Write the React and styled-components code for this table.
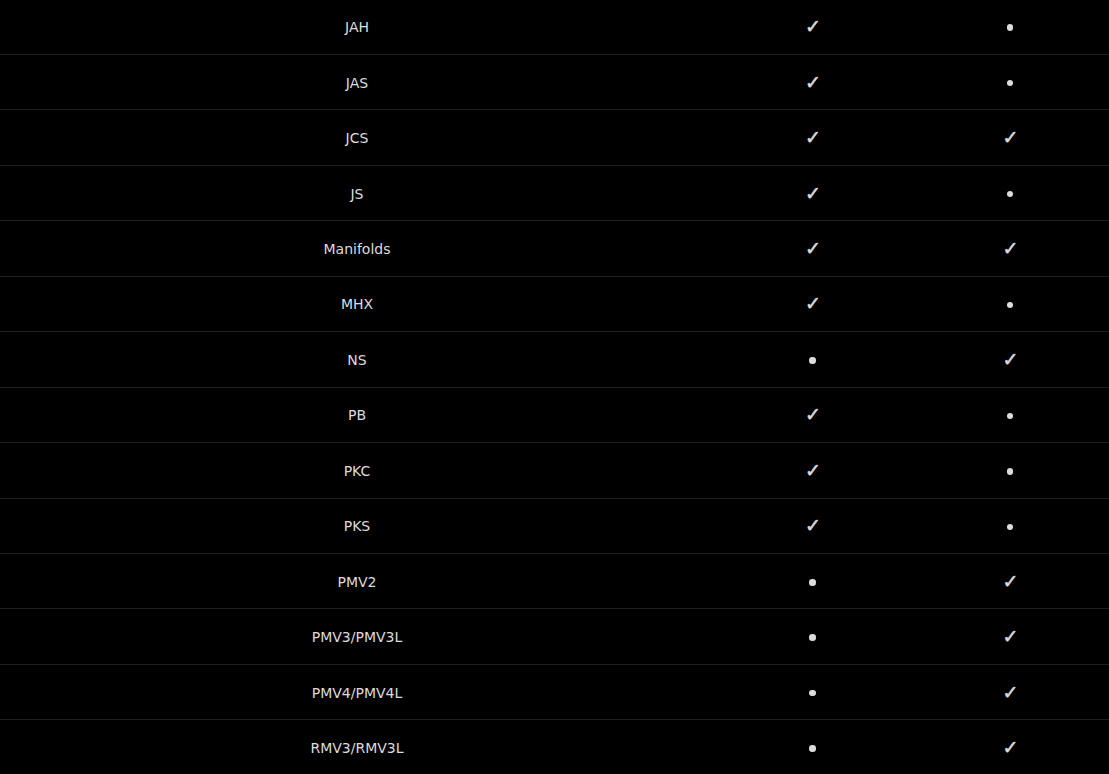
import React from "react";
import styled, { createGlobalStyle } from "styled-components";

const GlobalStyle = createGlobalStyle`
  html, body {
    margin: 0;
    padding: 0;
    background: #000;
    overflow: hidden;
  }
`;

const Table = styled.div`
  margin-top: -0.5px;
  font-family: "DejaVu Sans", "Liberation Sans", sans-serif;
  font-size: 14px;
  color: #dcdcdc;
`;

const Row = styled.div`
  display: grid;
  grid-template-columns: 714px 197px 1fr;
  align-items: center;
  box-sizing: border-box;
  height: 55.46px;
  border-bottom: 1px solid #1e1e1e;
`;

const Cell = styled.div`
  text-align: center;
  display: flex;
  justify-content: center;
  align-items: center;
  padding-top: ${(p) => (p.$name ? "1px" : "0")};
`;

const Check = styled.span`
  font-family: "DejaVu Sans", sans-serif;
  font-size: 19px;
  line-height: 1;
  -webkit-text-stroke: 0.5px #dcdcdc;
  margin-left: 1px;
`;

const Dot = styled.span`
  width: 6.5px;
  height: 6.5px;
  border-radius: 50%;
  background: #dcdcdc;
  margin-top: 2px;
`;

const rows = [
  ["JAH", 1, 0],
  ["JAS", 1, 0],
  ["JCS", 1, 1],
  ["JS", 1, 0],
  ["Manifolds", 1, 1],
  ["MHX", 1, 0],
  ["NS", 0, 1],
  ["PB", 1, 0],
  ["PKC", 1, 0],
  ["PKS", 1, 0],
  ["PMV2", 0, 1],
  ["PMV3/PMV3L", 0, 1],
  ["PMV4/PMV4L", 0, 1],
  ["RMV3/RMV3L", 0, 1],
];

const Mark = ({ on }) => (on ? <Check>✓</Check> : <Dot />);

export default function App() {
  return (
    <>
      <GlobalStyle />
      <Table>
        {rows.map(([name, a, b]) => (
          <Row key={name}>
            <Cell $name>{name}</Cell>
            <Cell>
              <Mark on={a} />
            </Cell>
            <Cell>
              <Mark on={b} />
            </Cell>
          </Row>
        ))}
      </Table>
    </>
  );
}
